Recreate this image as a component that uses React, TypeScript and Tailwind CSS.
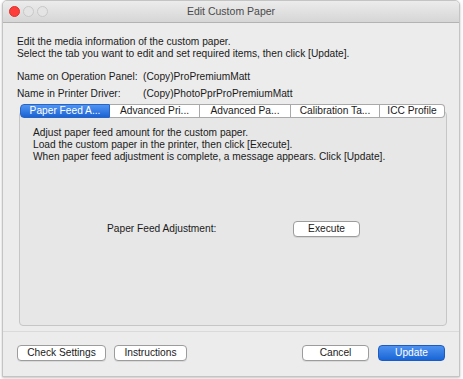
import React from "react";

const tabs = [
  { label: "Paper Feed A...", w: "w-[90px]" },
  { label: "Advanced Pri...", w: "w-[90px]" },
  { label: "Advanced Pa...", w: "w-[91px]" },
  { label: "Calibration Ta...", w: "w-[89px]" },
  { label: "ICC Profile", w: "w-[65px]" },
];

function Btn({ children, w, primary }: { children: React.ReactNode; w: string; primary?: boolean }) {
  return (
    <button
      className={
        primary
          ? `${w} h-[16px] rounded-[4px] border border-[#1d5bc0] bg-gradient-to-b from-[#4d92f0] to-[#1765d6] text-white text-[10.2px] leading-[14px]`
          : `${w} h-[16px] rounded-[4px] border border-[#9c9c9c] bg-white text-[#1a1a1a] text-[10.2px] leading-[14px] shadow-[0_1px_0_rgba(0,0,0,0.08)]`
      }
    >
      {children}
    </button>
  );
}

export default function App() {
  return (
    <div className="w-[463px] h-[379px] bg-white font-['Liberation_Sans',Arial,sans-serif] text-[10.2px] text-[#1a1a1a] overflow-hidden">
      <div className="ml-[2px] w-[458px] h-[377px] rounded-t-[5px] border border-[#c4c4c4] bg-[#ececec] shadow-[0_1px_3px_rgba(0,0,0,0.25)] flex flex-col overflow-hidden">
        {/* title bar */}
        <div className="h-[22px] shrink-0 bg-gradient-to-b from-[#ececec] to-[#d6d6d6] border-b border-[#b3b3b3] flex items-center relative">
          <div className="flex items-center gap-[3px] pl-[6px]">
            <span className="w-[11px] h-[11px] rounded-full bg-[#fc3d39] border border-[#e0302c]" />
            <span className="w-[11px] h-[11px] rounded-full bg-[#e4e4e4] border border-[#c8c8c8]" />
            <span className="w-[11px] h-[11px] rounded-full bg-[#e4e4e4] border border-[#c8c8c8]" />
          </div>
          <div className="absolute inset-0 flex items-center justify-center text-[10.5px] text-[#4a4a4a]">
            Edit Custom Paper
          </div>
        </div>

        {/* body */}
        <div className="flex flex-col pl-[14px] pt-[13px] leading-[12px]">
          <div>Edit the media information of the custom paper.</div>
          <div>Select the tab you want to edit and set required items, then click [Update].</div>
          <div className="flex mt-[11px]">
            <span className="w-[126px]">Name on Operation Panel:</span>
            <span>(Copy)ProPremiumMatt</span>
          </div>
          <div className="flex mt-[5px]">
            <span className="w-[126px]">Name in Printer Driver:</span>
            <span>(Copy)PhotoPprProPremiumMatt</span>
          </div>

          <div className="ml-[2px] mt-[4px] w-[428px] flex flex-col">
            <div className="relative z-10 ml-[1px] flex h-[14px]">
              {tabs.map((t, i) => (
                <div
                  key={t.label}
                  className={
                    i === 0
                      ? `${t.w} rounded-l-[4px] bg-gradient-to-b from-[#4f94f2] to-[#1b63d4] border border-[#2a64c0] text-white flex items-center justify-center`
                      : `${t.w} bg-white border-y border-r border-[#a9a9a9] flex items-center justify-center ${i === tabs.length - 1 ? "rounded-r-[4px]" : ""}`
                  }
                >
                  {t.label}
                </div>
              ))}
            </div>
            <div className="-mt-[7px] h-[215px] rounded-[4px] border border-[#c6c6c6] bg-[#e7e7e7] flex flex-col pl-[13px] pt-[15px]">
              <div>Adjust paper feed amount for the custom paper.</div>
              <div>Load the custom paper in the printer, then click [Execute].</div>
              <div>When paper feed adjustment is complete, a message appears. Click [Update].</div>
              <div className="flex items-center mt-[58px] ml-[74px]">
                <span className="w-[186px]">Paper Feed Adjustment:</span>
                <Btn w="w-[67px]">Execute</Btn>
              </div>
            </div>
          </div>
        </div>

        <div className="mt-[5px] border-t border-[#dadada]" />

        <div className="flex items-center pl-[14px] pr-[14px] mt-[13px]">
          <Btn w="w-[89px]">Check Settings</Btn>
          <div className="ml-[8px]">
            <Btn w="w-[73px]">Instructions</Btn>
          </div>
          <div className="ml-auto flex gap-[9px]">
            <Btn w="w-[67px]">Cancel</Btn>
            <Btn w="w-[67px]" primary>Update</Btn>
          </div>
        </div>
      </div>
    </div>
  );
}
